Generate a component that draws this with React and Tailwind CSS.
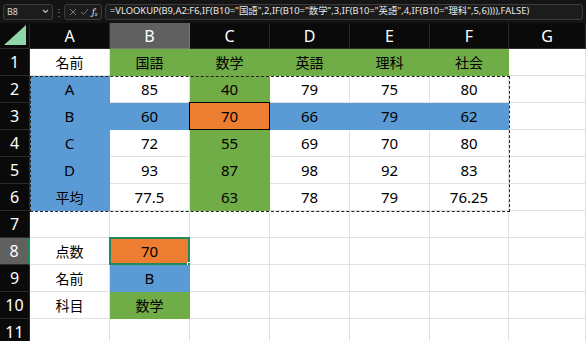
import React from "react";

const G = "bg-[#70ad47]";
const B = "bg-[#5b9bd5]";
const O = "bg-[#ed7d31]";

const cols = ["A", "B", "C", "D", "E", "F", "G"];

// each row: [text, bg] for A..G
const rows = [
  [["名前", ""], ["国語", G], ["数学", G], ["英語", G], ["理科", G], ["社会", G], ["", ""]],
  [["A", B], ["85", ""], ["40", G], ["79", ""], ["75", ""], ["80", ""], ["", ""]],
  [["B", B], ["60", B], ["70", O], ["66", B], ["79", B], ["62", B], ["", ""]],
  [["C", B], ["72", ""], ["55", G], ["69", ""], ["70", ""], ["80", ""], ["", ""]],
  [["D", B], ["93", ""], ["87", G], ["98", ""], ["92", ""], ["83", ""], ["", ""]],
  [["平均", B], ["77.5", ""], ["63", G], ["78", ""], ["79", ""], ["76.25", ""], ["", ""]],
  [["", ""], ["", ""], ["", ""], ["", ""], ["", ""], ["", ""], ["", ""]],
  [["点数", ""], ["70", O], ["", ""], ["", ""], ["", ""], ["", ""], ["", ""]],
  [["名前", ""], ["B", B], ["", ""], ["", ""], ["", ""], ["", ""], ["", ""]],
  [["科目", ""], ["数学", G], ["", ""], ["", ""], ["", ""], ["", ""], ["", ""]],
  [["", ""], ["", ""], ["", ""], ["", ""], ["", ""], ["", ""], ["", ""]],
];

const isJa = (t) => /[^\x00-\x7f]/.test(t);

function Cell({ text, bg, r, c }) {
  const orangeSel = r === 2 && c === 2;
  const active = r === 7 && c === 1;
  return (
    <div
      className={`relative h-[27px] flex items-center justify-center border-r border-b ${
        bg ? "border-transparent" : "border-[#e1e1e1]"
      } ${bg || "bg-white"} ${isJa(text) ? "text-[14px]" : "text-[15px]"} text-black`}
    >
      {text}
      {orangeSel && (
        <div className="absolute inset-[-1px] border-[1.5px] border-black pointer-events-none" />
      )}
      {active && (
        <>
          <div className="absolute inset-[-1px] border-2 border-[#1f8a5a] pointer-events-none" />
          <div className="absolute right-[-3px] bottom-[-3px] w-[5px] h-[5px] bg-[#1f8a5a] border border-white" />
        </>
      )}
    </div>
  );
}

export default function App() {
  return (
    <div
      className="w-[586px] h-[341px] overflow-hidden bg-[#0a0a0a]"
      style={{ fontFamily: '"Noto Sans", "Noto Sans CJK JP", sans-serif' }}
    >
      {/* formula bar */}
      <div className="h-[23px] flex items-center gap-[3px] px-[3px] bg-[#141414]">
        <div className="w-[50px] h-[16px] rounded-[3px] border border-[#3c3c3c] bg-[#1c1c1c] flex items-center justify-between px-[3px] text-[9px] text-[#d8d8d8]">
          <span>B8</span>
          <svg width="7" height="5" viewBox="0 0 7 5">
            <path d="M1 1l2.5 2.5L6 1" stroke="#bbb" strokeWidth="1.2" fill="none" />
          </svg>
        </div>
        <div className="w-[5px] text-[#888] text-[10px] leading-none flex justify-center">⋮</div>
        <div className="w-[38px] h-[16px] rounded-[3px] border border-[#3c3c3c] bg-[#1c1c1c] flex items-center justify-around px-[2px]">
          <svg width="8" height="8" viewBox="0 0 8 8">
            <path d="M1 1l6 6M7 1L1 7" stroke="#777" strokeWidth="1" />
          </svg>
          <svg width="9" height="8" viewBox="0 0 9 8">
            <path d="M1 4l2.5 2.5L8 1" stroke="#777" strokeWidth="1" fill="none" />
          </svg>
          <span className="text-[10px] italic text-[#ddd] font-serif leading-none">
            f<sub className="text-[6px]">x</sub>
          </span>
        </div>
        <div className="flex-1 h-[16px] rounded-[3px] border border-[#3c3c3c] bg-[#1c1c1c] flex items-center px-[4px] text-[9.4px] text-[#e8e8e8] whitespace-nowrap overflow-hidden">
          =VLOOKUP(B9,A2:F6,IF(B10="国語",2,IF(B10="数学",3,IF(B10="英語",4,IF(B10="理科",5,6)))),FALSE)
        </div>
      </div>

      {/* sheet */}
      <div className="relative grid grid-cols-[30px_80px_80px_80px_80px_80px_79px_77px]">
        {/* column headers */}
        <div className="h-[26px] border-r border-b border-[#2c2c2c] flex items-end justify-end p-[3px] bg-[#0a0a0a]">
          <svg width="22" height="20" viewBox="0 0 22 20">
            <path d="M22 0V20H0Z" fill="#8fd6a8" />
          </svg>
        </div>
        {cols.map((c) => (
          <div
            key={c}
            className={`h-[26px] flex items-center justify-center text-[16px] text-white border-r border-b ${
              c === "B" ? "bg-[#606060] border-[#777]" : "bg-[#0a0a0a] border-[#2c2c2c]"
            }`}
          >
            {c}
          </div>
        ))}

        {rows.map((row, r) => (
          <React.Fragment key={r}>
            <div
              className={`h-[27px] flex items-center justify-center text-[16px] text-white border-b border-[#2c2c2c] ${
                r === 7 ? "bg-[#606060] border-r-2 border-r-[#1f8a5a]" : "bg-[#0a0a0a] border-r"
              }`}
            >
              {r + 1}
            </div>
            {row.map(([t, bg], c) => (
              <Cell key={c} text={t} bg={bg} r={r} c={c} />
            ))}
          </React.Fragment>
        ))}

        {/* copy marquee around A2:F6 */}
        <div className="absolute left-[30px] top-[53px] w-[480px] h-[136px] border-[1.5px] border-dashed border-[#222] pointer-events-none" />
      </div>
    </div>
  );
}
